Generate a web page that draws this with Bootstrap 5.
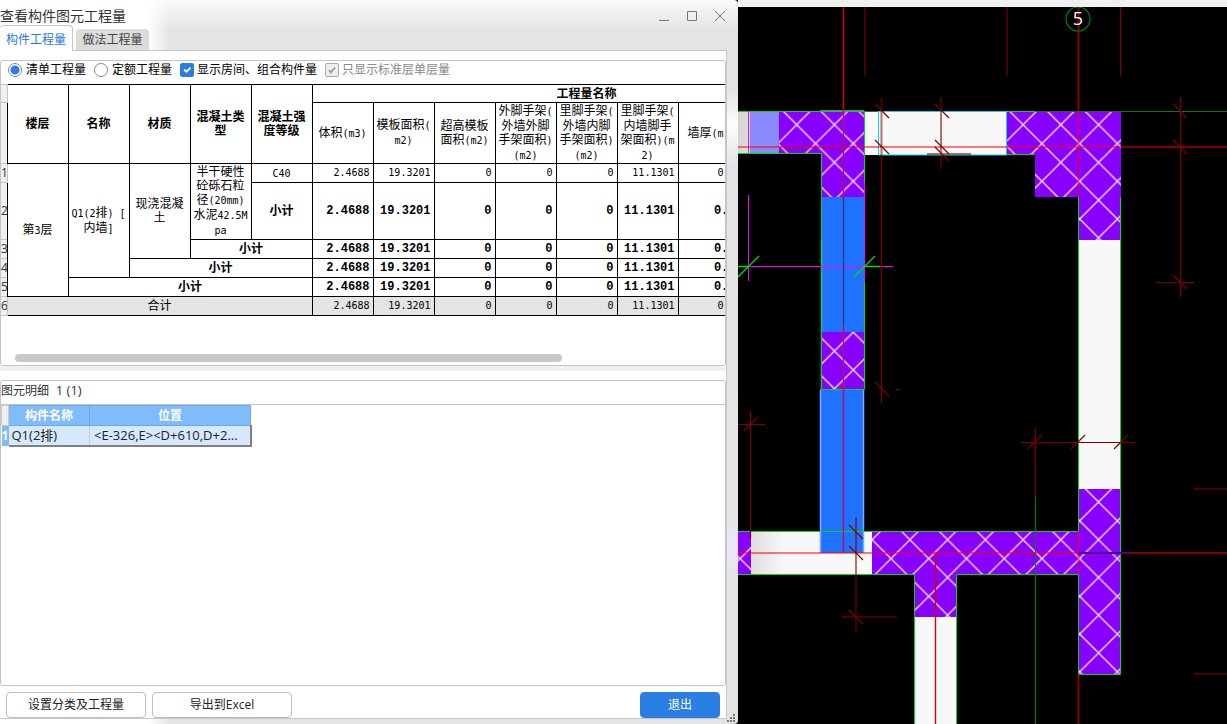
<!DOCTYPE html>
<html lang="zh-CN">
<head>
<meta charset="utf-8">
<meta name="viewport" content="width=device-width, initial-scale=1">
<title>查看构件图元工程量</title>
<link href="https://cdn.jsdelivr.net/npm/bootstrap@5.3.0/dist/css/bootstrap.min.css" rel="stylesheet">
<style>
body{font-family:"Open Sans","Noto Sans CJK SC",sans-serif;font-size:12px;line-height:18px;color:#222;background:#000}
.workspace{display:grid;grid-template-columns:minmax(0,738fr) minmax(0,489fr);min-height:100vh;background:#000}
.dialog{min-width:0;padding-right:11px;border-radius:0 4px 4px 0;position:relative;
 background:linear-gradient(to right,#fff 148px,rgba(255,255,255,0) 170px),linear-gradient(#fafafa,#e4e4e4 30px,#e4e4e4 90px,#fdfdfd 125px,#e4e4e4 165px,#e4e4e4 520px,#efe6fb 545px,#e4e4e4 575px)}
.title-bar{height:25px;padding-top:6px;margin-right:-7px}
.title-bar h1{font-size:14px;line-height:19px;font-weight:400;color:#333}
.win-btn{width:28px;height:20px;padding:0;border:0;background:none;line-height:0;color:#777}
.tab-strip{height:26px}
.tab-strip .nav-link{font-size:12px;line-height:18px;padding:0;border:0;border-radius:4px 4px 0 0}
.tab-strip .tab-on{width:73px;height:26px;padding-top:2px;background:#fff;color:#1f7ae0;border:1px solid #c4c4cc;border-left:0;border-bottom:0}
.tab-strip .tab-off{width:73px;height:21px;background:#dcdcdc;color:#444;margin-left:3px}
.tab-line{border-bottom:1px solid #c4c6d0}
.pane{background:#fff;border-right:1px solid #c4c6d0;border-bottom:1px solid #c4c6d0;padding-top:9px}
.group-box{border:1px solid #c4c4c4;border-radius:3px;background:#fff;overflow:hidden}
.choices{height:23px;padding-left:7px;color:#000}
.choices label{line-height:18px}
.choices .form-check-input{margin:0 4px 0 0;width:14px;height:14px;border-color:#888;flex:none;background-color:#fff;box-shadow:none}
.choices .form-check-input[type=checkbox]{border-radius:2px;margin-right:3px}
.choices .form-check-input[type=radio]:checked{background-image:radial-gradient(circle,#2b7de0 4px,rgba(255,255,255,0) 5px)}
.choices .form-check-input[type=checkbox]:checked{background-color:#2b7de0;border-color:#2b7de0}
.choices .form-check-input:disabled:checked{background-color:#eee;border-color:#aaa;opacity:1;background-image:url("data:image/svg+xml,%3csvg xmlns='http://www.w3.org/2000/svg' viewBox='0 0 20 20'%3e%3cpath fill='none' stroke='%23999' stroke-width='3' d='m5 10 3 4 7-8'/%3e%3c/svg%3e")}
.choices .form-check-input:disabled~label{opacity:1;color:#888}
.sheet-wrap{height:270px;overflow:hidden}
.sheet{table-layout:fixed;width:860px;border-collapse:collapse;color:#000;line-height:14px}
.sheet th,.sheet td{border:1px solid #000;padding:0;text-align:center;vertical-align:middle;overflow:hidden;white-space:nowrap}
.sheet .row-no{border:1px solid #c4c4c4;border-left:0;background:#f0f0f0;color:#333;font-weight:400;font-size:12px;text-align:left}
.sheet thead .measure{font-weight:400}
.sheet .num{text-align:right;padding-right:3px;font:10px/14px "DejaVu Sans Mono",monospace}
.sheet .sum-row .num,.sheet .num.sub{font:bold 12px/14px "Liberation Mono",monospace}
.sheet .sub{font-weight:700}
.sheet .en{font-family:"DejaVu Sans Mono",monospace;font-size:10px}
.sheet .total{background:#e4e4e4}
.scroll-track{height:11px;padding-left:14px}
.scroll-thumb{width:77%;height:8px;border-radius:4px;background:#c8c8c8}
.splitter{height:14px;border-bottom:9px solid #fff;background:#f0f0f0}
.detail-box{min-height:306px}
.detail-head{height:24px;border-bottom:1px solid #c4c4c4;color:#333;white-space:pre}
.detail-head span{font-size:13px}
.detail{table-layout:fixed;width:249px;border-collapse:collapse}
.detail th,.detail td{padding:0;height:20px;line-height:18px;overflow:hidden;white-space:nowrap}
.detail thead th{background:#80bbfb;border:1px solid #69a9ee;color:#fff;text-align:center}
.detail thead .corner{background:#f0f0f0;border-color:#ccc}
.detail tbody th{background:#80bbfb;color:#fff}
.detail tbody td{background:#d6e9ff;border-right:1px solid #c4cdd8;border-bottom:2px solid #808080;padding-left:3px;color:#222;font-size:13px}
.detail tbody td:last-child{border-right:2px solid #808080;padding-left:4px}
.actions{padding:6px 6px 0 6px;height:32px}
.actions .btn{height:26px;width:140px;padding:0;font-size:12px;line-height:18px;border:1px solid #bfbfbf;border-radius:4px;color:#222;background:#fff}
.actions .btn.export{margin-left:6px}
.actions .btn.quit{width:80px;background:#2b7fe2;border-color:#2b7fe2;color:#fff}
.grip{position:absolute;right:3px;bottom:2px}
.viewport{background:#000;border-top:7px solid #f0f0f0;position:relative;overflow:hidden}
.viewport svg{display:block;width:100%;height:717px}
</style>
</head>
<body>
<main class="workspace">
<section class="dialog d-flex flex-column">
  <header class="title-bar d-flex justify-content-between align-items-center flex-shrink-0">
    <h1 class="m-0">查看构件图元工程量</h1>
    <div class="d-flex">
      <button class="win-btn" aria-label="最小化"><svg width="12" height="12" stroke="currentColor"><path d="M1 10.500h10"/></svg></button>
      <button class="win-btn" aria-label="最大化"><svg width="12" height="12" fill="none" stroke="currentColor"><path d="M1.500 1.500h9v9h-9z"/></svg></button>
      <button class="win-btn" aria-label="关闭"><svg width="12" height="12" fill="none" stroke="currentColor"><path d="M1 1l10 10M11 1L1 11"/></svg></button>
    </div>
  </header>
  <nav class="tab-strip d-flex align-items-end flex-shrink-0">
    <button class="nav-link tab-on">构件工程量</button>
    <div class="tab-line flex-grow-1 d-flex"><button class="nav-link tab-off">做法工程量</button></div>
  </nav>
  <div class="pane d-flex flex-column">
    <div class="group-box">
      <div class="choices d-flex align-items-start">
        <div class="d-flex align-items-center me-2"><input class="form-check-input" type="radio" name="kind" id="k1" checked><label for="k1">清单工程量</label></div>
        <div class="d-flex align-items-center me-2"><input class="form-check-input" type="radio" name="kind" id="k2"><label for="k2">定额工程量</label></div>
        <div class="d-flex align-items-center me-2"><input class="form-check-input" type="checkbox" id="c1" checked><label for="c1">显示房间、组合构件量</label></div>
        <div class="d-flex align-items-center"><input class="form-check-input" type="checkbox" id="c2" checked disabled><label for="c2">只显示标准层单层量</label></div>
      </div>
      <div class="sheet-wrap">
      <table class="sheet">
        <colgroup><col style="width:6px"><col span="14" style="width:61px"></colgroup>
        <thead>
          <tr style="height:18px"><th class="row-no"></th><th rowspan="2">楼层</th><th rowspan="2">名称</th><th rowspan="2">材质</th><th rowspan="2">混凝土类<br>型</th><th rowspan="2">混凝土强<br>度等级</th><th colspan="9">工程量名称</th></tr>
          <tr style="height:61px"><th class="row-no"></th><th class="measure">体积<span class="en">(m3)</span></th><th class="measure">模板面积<span class="en">(<br>m2)</span></th><th class="measure">超高模板<br>面积<span class="en">(m2)</span></th><th class="measure">外脚手架<span class="en">(</span><br>外墙外脚<br>手架面积<span class="en">)<br>(m2)</span></th><th class="measure">里脚手架<span class="en">(</span><br>外墙内脚<br>手架面积<span class="en">)<br>(m2)</span></th><th class="measure">里脚手架<span class="en">(</span><br>内墙脚手<br>架面积<span class="en">)(m<br>2)</span></th><th class="measure">墙厚<span class="en">(m)</span></th><th></th><th></th></tr>
        </thead>
        <tbody>
          <tr style="height:19px"><th class="row-no">1</th><td rowspan="5">第<span class="en">3</span>层</td><td rowspan="4"><span class="en">Q1(2</span>排<span class="en">) [</span><br>内墙<span class="en">]</span></td><td rowspan="3">现浇混凝<br>土</td><td rowspan="2">半干硬性<br>砼砾石粒<br>径<span class="en">(20mm)</span><br>水泥<span class="en">42.5M<br>pa</span></td><td><span class="en">C40</span></td><td class="num">2.4688</td><td class="num">19.3201</td><td class="num">0</td><td class="num">0</td><td class="num">0</td><td class="num">11.1301</td><td class="num">0.2</td><td></td><td></td></tr>
          <tr class="sum-row" style="height:57px"><th class="row-no">2</th><td class="sub">小计</td><td class="num">2.4688</td><td class="num">19.3201</td><td class="num">0</td><td class="num">0</td><td class="num">0</td><td class="num">11.1301</td><td class="num">0.2</td><td></td><td></td></tr>
          <tr class="sum-row" style="height:19px"><th class="row-no">3</th><td class="sub" colspan="2">小计</td><td class="num">2.4688</td><td class="num">19.3201</td><td class="num">0</td><td class="num">0</td><td class="num">0</td><td class="num">11.1301</td><td class="num">0.2</td><td></td><td></td></tr>
          <tr class="sum-row" style="height:19px"><th class="row-no">4</th><td class="sub" colspan="3">小计</td><td class="num">2.4688</td><td class="num">19.3201</td><td class="num">0</td><td class="num">0</td><td class="num">0</td><td class="num">11.1301</td><td class="num">0.2</td><td></td><td></td></tr>
          <tr class="sum-row" style="height:19px"><th class="row-no">5</th><td class="sub" colspan="4">小计</td><td class="num">2.4688</td><td class="num">19.3201</td><td class="num">0</td><td class="num">0</td><td class="num">0</td><td class="num">11.1301</td><td class="num">0.2</td><td></td><td></td></tr>
          <tr class="total" style="height:19px"><th class="row-no">6</th><td colspan="5">合计</td><td class="num">2.4688</td><td class="num">19.3201</td><td class="num">0</td><td class="num">0</td><td class="num">0</td><td class="num">11.1301</td><td class="num">0.2</td><td></td><td></td></tr>
        </tbody>
      </table>
      </div>
      <div class="scroll-track"><div class="scroll-thumb"></div></div>
    </div>
    <div class="splitter"></div>
    <div class="group-box detail-box">
      <div class="detail-head">图元明细<span>  1 (1)</span></div>
      <table class="detail">
        <colgroup><col style="width:7px"><col style="width:81px"><col style="width:161px"></colgroup>
        <thead><tr><th class="corner"></th><th>构件名称</th><th>位置</th></tr></thead>
        <tbody><tr><th>1</th><td>Q1(2排)</td><td>&lt;E-326,E&gt;&lt;D+610,D+2...</td></tr></tbody>
      </table>
    </div>
    <div class="actions d-flex">
      <button class="btn">设置分类及工程量</button>
      <button class="btn export">导出到Excel</button>
      <button class="btn quit ms-auto">退出</button>
    </div>
  </div>
  <svg class="grip" width="8" height="8" fill="#777"><path d="M6 0h2v2H6zM3 3h2v2H3zM6 3h2v2H6zM0 6h2v2H0zM3 6h2v2H3zM6 6h2v2H6z"/></svg>
</section>

<section class="viewport" aria-label="图纸">
<svg viewBox="738 7 489 717" preserveAspectRatio="xMinYMin slice">
  <defs>
    <pattern id="hatch" patternUnits="userSpaceOnUse" x="796.700" y="124.700" width="37.730" height="37.730">
      <rect width="38" height="38" fill="#8800ff"/>
      <path d="M-1-1L39 39M38.730-1L-1 38.730" stroke="#f6e8ff" stroke-width="1.300"/>
    </pattern>
    <linearGradient id="fade"><stop offset="0" stop-color="#d4d4d4"/><stop offset="1" stop-color="#f8f8f8"/></linearGradient>
  </defs>
  <!-- walls -->
  <g fill="#f8f8f8">
    <path d="M865 111h142v44H865zM1078 239h43v251h-43zM751 531h121v43H751zM914 616h43v108h-43z"/>
    <path d="M738 111h13v43h-13zM751 531h34v43h-34z" fill="url(#fade)"/>
  </g>
  <path d="M750 111h29v43h-29z" fill="#8a8aff"/>
  <path d="M821 197h43v192h-43zM820 389h43v164h-43z" fill="#1e72ff"/>
  <path d="M820.500 390v163M863.500 390v163M821.500 240v149" stroke="#7fa9f5" stroke-width="1.500" fill="none"/>
  <!-- columns -->
  <path fill="url(#hatch)" d="M779 111h86v86h-43v-43h-43zM822 332h42v57h-42zM1007 111h114v129h-43v-43h-43v-43h-28zM872 531h206v-42h43v185h-43V574H957v43h-43v-43h-42zM738 531h13v43h-13z"/>
  <!-- outlines -->
  <g fill="none" stroke="#0d0" stroke-width="1">
    <path d="M738 111.500h127M738 153.500h83.500V389.500h43V281M864.500 111v72M1007 111.500h28M1007 154.500h28M738 531.500h340.500V197M1120.500 197v477.500h-42V574.500H956.500V724M738 574.500h176.500V724"/>
    <path d="M1035 111.500h192M1035.500 496v228" stroke="#008000"/>
    <path d="M878.500 155V111.500h128V155z" stroke="#00dce8"/>
    <path d="M865 111.500h13" stroke="#555"/>
    <path d="M820 110.500h44" stroke="#657a95"/>
    <path d="M748.500 111v42M748.500 195v86M738 266.500h155M864.500 183v98" stroke="#f0f"/>
    <path d="M738 277l21-21M854 277l21-21M865 266.500h15M738 266.500h11" stroke="#0d0" stroke-width="1.300"/>
  </g>
  <!-- axes -->
  <g fill="none" stroke="#f00">
    <path d="M738 147h489M738 553h340M1078.500 7v190M1078.500 531v43M1078.500 674v50" stroke-opacity=".52" stroke-width="2"/>
    <path d="M843.500 7v104M935.500 553v171" stroke="#d80000" stroke-width="1.400"/>
    <path d="M843.500 111v86M843.500 325v228" stroke="#b81060" stroke-width="1.400"/>
    <path d="M843.500 197v128" stroke="#33347e" stroke-width="1.400"/>
    <path d="M1078 553h52" stroke="#4b0089" stroke-width="2"/>
    <path d="M1130 553h97" stroke="#800000" stroke-width="2"/>
  </g>
  <!-- dimensions -->
  <g fill="none" stroke="#800000">
    <path d="M1120.500 7v69M881.500 155v248M1180.500 97v200M1156 282.500h38M738 424.500h27M750.500 411v128M1021 442.500h114M1035.500 428v68M896 389.500h4" stroke-width="1.200"/>
    <path d="M865 7v69M1007 7v69M941 97v72M881.500 97v59M856 517v114M842 617h55M927 154h44M1194 489h33M1194 674h33" stroke-width="2" stroke-opacity=".55"/>
    <path d="M875 104l14 14M875 140l14 14M935 104l14 14M935 140l14 14M935 147l14 14M875 382l14 14M1173 104l14 14M1173 140l14 14M1173 275l14 14M744 431l14-14M849 525l14 14M849 546l14 14M849 610l14 14M1028 449l14-14M1071 449l14-14M1114 449l14-14" stroke-width="1.200"/>
  </g>
  <circle cx="1078" cy="19" r="12" fill="none" stroke="#008000" stroke-width="1.200"/>
  <text x="1078" y="25" text-anchor="middle" font-family="Open Sans" font-size="18" fill="#fff">5</text>
</svg>
</section>
</main>
<script src="https://cdn.jsdelivr.net/npm/bootstrap@5.3.0/dist/js/bootstrap.bundle.min.js"></script>
</body>
</html>
